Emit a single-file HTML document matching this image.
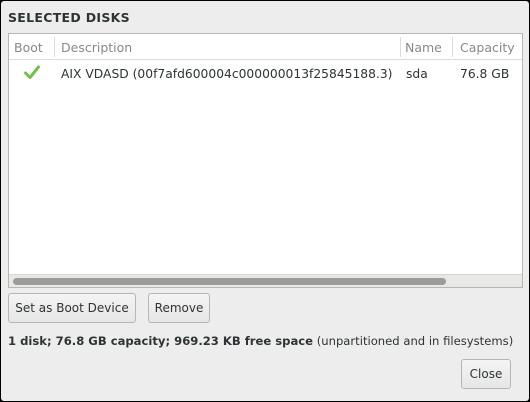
<!DOCTYPE html>
<html><head><style>
*{margin:0;padding:0;box-sizing:border-box}
body{width:530px;height:402px;background:#000;font-family:"DejaVu Sans","Liberation Sans",sans-serif;overflow:hidden;position:relative}
.win{position:absolute;left:1px;top:1px;width:528px;height:400px;background:#ededed;border-radius:3px}
.abs{position:absolute;white-space:nowrap}
.title{left:7px;top:9px;font-size:12.5px;font-weight:bold;color:#2e3436;letter-spacing:0.3px}
.table{left:7px;top:32px;width:515px;height:255px;background:#fff;border:1px solid #b6b6b3}
.hdr{position:absolute;left:0;top:0;width:100%;height:26px;border-bottom:1px solid #dcdcdc;font-size:12.5px;color:#888a85}
.hdr span{position:absolute;top:6px}
.sep{position:absolute;top:3px;width:1px;height:20px;background:#dcdcdc}
.row{font-size:12.3px;color:#2e3436}
.sb{position:absolute;left:0;bottom:0;width:100%;height:13px;background:#e8e8e7;border-top:1px solid #d6d6d6}
.thumb{position:absolute;left:4px;top:3px;width:433px;height:7px;border-radius:4px;background:#9a9c98}
.btn{position:absolute;height:30px;border:1px solid #b6b6b3;border-radius:3px;background:linear-gradient(#f4f4f4,#e6e6e6);font-size:12px;color:#2e3436;text-align:center;line-height:28px}
.sum{left:7px;top:333px;font-size:11.6px;color:#2e3436}
</style></head><body>
<div class="win">
<div class="abs title">SELECTED DISKS</div>
<div class="abs table">
 <div class="hdr">
  <span style="left:5px">Boot</span><div class="sep" style="left:45px"></div>
  <span style="left:52px">Description</span><div class="sep" style="left:391px"></div>
  <span style="left:396px">Name</span><div class="sep" style="left:443px"></div>
  <span style="left:451px">Capacity</span>
 </div>
 <svg class="abs" style="left:15px;top:31px" width="16" height="15" viewBox="0 0 16 15"><path d="M1.5 8 L6 12.5 L14.5 2" fill="none" stroke="#73c04a" stroke-width="3" stroke-linecap="round" stroke-linejoin="round"/></svg>
 <div class="abs row" style="left:52px;top:33px">AIX VDASD (00f7afd600004c000000013f25845188.3)</div>
 <div class="abs row" style="left:397px;top:33px">sda</div>
 <div class="abs row" style="left:451px;top:33px">76.8 GB</div>
 <div class="sb"><div class="thumb"></div></div>
</div>
<div class="btn" style="left:7px;top:292px;width:128px">Set as Boot Device</div>
<div class="btn" style="left:147px;top:292px;width:62px">Remove</div>
<div class="abs sum"><b>1 disk; 76.8 GB capacity; 969.23 KB free space</b> (unpartitioned and in filesystems)</div>
<div class="btn" style="left:460px;top:358px;width:50px">Close</div>
</div>
</body></html>
